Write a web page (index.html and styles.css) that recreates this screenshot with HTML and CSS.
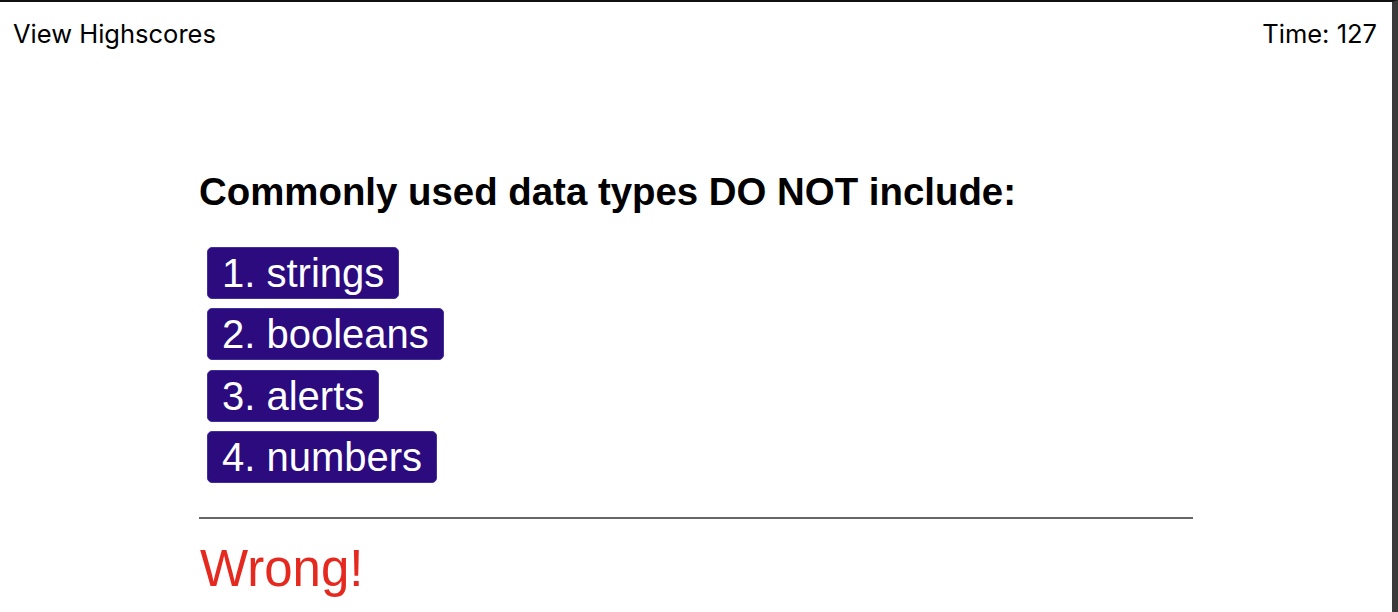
FILE: index.html
```html
<!DOCTYPE html>
<html lang="en">
<head>
<meta charset="utf-8">
<title>Code Quiz</title>
<link rel="stylesheet" href="styles.css">
</head>
<body>
  <header class="topbar">
    <a class="highscores-link" href="#">View Highscores</a>
    <div class="timer">Time: <span>127</span></div>
  </header>
  <main class="quiz">
    <h1 class="question">Commonly used data types DO NOT include:</h1>
    <div class="choices">
      <button class="choice">1. strings</button>
      <button class="choice">2. booleans</button>
      <button class="choice">3. alerts</button>
      <button class="choice">4. numbers</button>
    </div>
    <hr class="divider">
    <p class="feedback">Wrong!</p>
  </main>
</body>
</html>
```

FILE: styles.css
```css
html, body {
  margin: 0;
  padding: 0;
  background: #ffffff;
}

body {
  height: 612px;
  box-sizing: border-box;
  border-top: 2px solid #111111;
  border-right: 6px solid #3d3a3b;
  overflow: hidden;
  font-family: "Liberation Sans", Arial, sans-serif;
  color: #000000;
}

.topbar {
  display: flex;
  justify-content: space-between;
  align-items: flex-start;
  padding: 17px 15px 0 13px;
  font-family: Inter, "Liberation Sans", sans-serif;
  font-size: 25.5px;
  line-height: 30px;
}

.highscores-link {
  color: #000000;
  text-decoration: none;
}

.quiz {
  width: 994px;
  margin: 121px auto 0;
}

.question {
  margin: 0;
  font-size: 38.4px;
  line-height: 44px;
  font-weight: 700;
}

.choices {
  display: flex;
  flex-direction: column;
  align-items: flex-start;
  gap: 9.3px;
  margin: 33px 0 0 8px;
}

.choice {
  font-family: "Liberation Sans", Arial, sans-serif;
  font-size: 40px;
  line-height: 46px;
  color: #ffffff;
  background: #2b0b7e;
  border: 1px solid #40309c;
  border-radius: 5px;
  padding: 2px 14px;
  cursor: pointer;
}

.divider {
  margin: 34px 0 0;
  height: 0;
  border: 0;
  border-top: 2px solid #666666;
}

.feedback {
  margin: 21px 0 0 1px;
  font-size: 51px;
  line-height: 58px;
  color: #e6291e;
}
```
